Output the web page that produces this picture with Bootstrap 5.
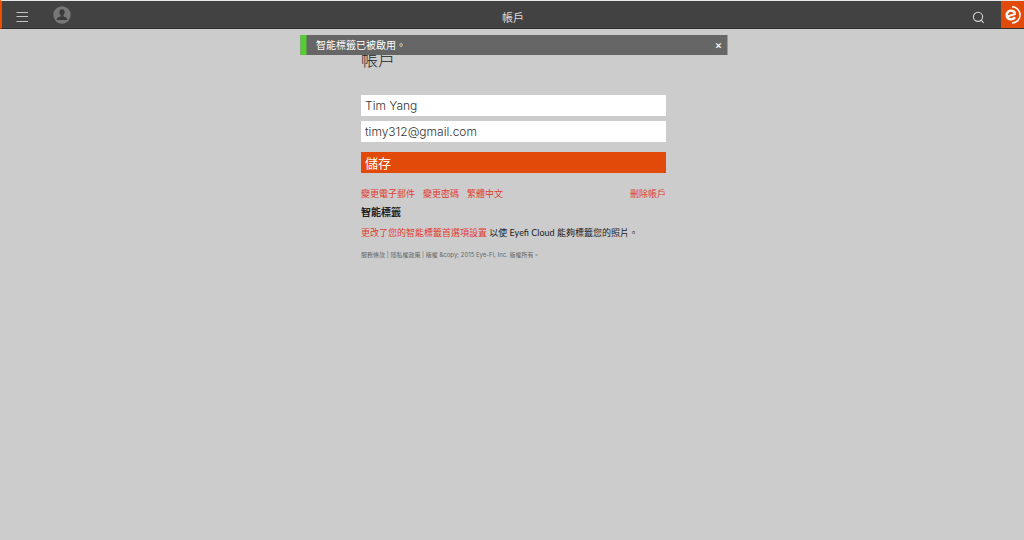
<!DOCTYPE html>
<html lang="zh-Hant">
<head>
<meta charset="utf-8">
<meta name="viewport" content="width=device-width, initial-scale=1">
<title>帳戶</title>
<link href="https://cdn.jsdelivr.net/npm/bootstrap@5.3.0/dist/css/bootstrap.min.css" rel="stylesheet">
<style>
  body { background: #ccc; color: #222; font-family: Inter, "Noto Sans CJK TC", sans-serif; font-size: 9px; line-height: 12px; font-weight: 400; }
  a { color: #e23b30; text-decoration: none; }
  a:hover { text-decoration: underline; }
  svg { display: block; }
  .topbar { height: 29px; background: #424242; border-top: 1px solid #e4e8e8; border-bottom: 1px solid #2e2e2e; border-left: 2px solid #f04e00; }
  .topbar-side { flex: 1 1 0; }
  .topbar-title { color: #ddd; font-size: 11px; line-height: 16px; padding-top: 6px; }
  .icon-btn { background: none; border: 0; padding: 0; }
  .menu-btn { margin-left: 14px; margin-top: 4px; }
  .user-btn { margin-left: 24px; margin-top: 1px; }
  .search-btn { margin-right: 16px; margin-top: 5px; }
  .brand { background: #e24a0a; width: 23px; }
  .page-body { margin-left: 3px; padding-top: 19px; }
  .notice { top: 6px; width: 427px; max-width: 100%; min-height: 20px; background: #666; border-left: 6px solid #5c3; color: #fff; font-size: 10px; line-height: 20px; padding: 0 5px 0 10px; z-index: 5; }
  .notice-close { color: #fff; font-size: 11px; line-height: 20px; font-weight: 500; }
  .account { width: 305px; max-width: 100%; }
  .page-title { font-size: 17px; line-height: 24px; font-weight: 300; margin: 0 0 23px; }
  .field { min-height: 0; border: 0; border-radius: 0; padding: 0 4px; font-size: 12px; line-height: 21px; font-weight: 300; color: #333; margin-bottom: 5px; }
  .field:focus { box-shadow: none; outline: 1px solid #e24a0a; }
  .save-btn { height: 21px; background: #e24a0a; color: #fff; border: 0; border-radius: 0; padding: 0 4px; font-size: 13px; line-height: 22px; font-weight: 400; margin-top: 5px; }
  .save-btn:hover { background: #c94006; color: #fff; }
  .account-links { gap: 8px; margin: 15px 0 5px; }
  .section-title { font-size: 10px; line-height: 14px; font-weight: 700; }
  .hint { font-family: Lato, "Noto Sans CJK TC", sans-serif; margin-bottom: 11px; }
  .fine-print { font-size: 6px; line-height: 10px; color: #666; }
  .fine-print a { color: inherit; }
</style>
</head>
<body>
<header class="topbar d-flex align-items-stretch">
  <div class="topbar-side d-flex align-items-center">
    <button type="button" class="icon-btn menu-btn" aria-label="選單">
      <svg width="13" height="12" viewBox="0 0 13 12" stroke="#c4c4c4" stroke-width="1"><path d="M0.500 1.500h11.500M0.500 5.500h11.500M0.500 10.500h11.500"/></svg>
    </button>
    <button type="button" class="icon-btn user-btn" aria-label="使用者">
      <svg width="18" height="18" viewBox="0 0 18 18"><circle cx="9" cy="9" r="8.700" fill="#777"/><path d="M9 3.200c-1.800 0-2.700 1.300-2.600 3 .1 1.500.7 2.300 1.300 3v1c-1.200.7-3.500.9-3.900 2.900v.9h10.400v-.9c-.4-2-2.700-2.200-3.900-2.900v-1c.6-.7 1.200-1.500 1.300-3 .1-1.700-.8-3-2.600-3z" fill="#3c3c3c"/></svg>
    </button>
  </div>
  <div class="topbar-title align-self-center">帳戶</div>
  <div class="topbar-side d-flex justify-content-end">
    <button type="button" class="icon-btn search-btn" aria-label="搜尋">
      <svg width="13" height="13" viewBox="0 0 13 13" fill="none" stroke="#d8d8d8" stroke-width="1.100"><circle cx="6" cy="5.800" r="4.600"/><path d="M9 8.900l2.600 2.900"/></svg>
    </button>
    <a href="#" class="brand d-flex align-items-center justify-content-center" aria-label="Eyefi">
      <svg width="19" height="20" viewBox="0 0 19 20" fill="none"><path d="M9 1.800a7.900 7.900 0 1 1 0 16.200" stroke="#fff" stroke-width="1.500"/><circle cx="8" cy="10" r="4.300" stroke="#fff" stroke-width="2.600" stroke-dasharray="22.500 4.500" transform="rotate(28 8 10)"/><path d="M4.200 11.500l8.600-2.600" stroke="#fff" stroke-width="1.900"/></svg>
    </a>
  </div>
</header>

<div class="page-body position-relative">
  <div class="notice position-absolute start-50 translate-middle-x d-flex justify-content-between" role="status">
    <span>智能標籤已被啟用。</span>
    <button type="button" class="icon-btn notice-close" aria-label="關閉">×</button>
  </div>

  <main class="account mx-auto">
    <h1 class="page-title">帳戶</h1>
    <form>
      <input type="text" class="form-control field" aria-label="名稱" value="Tim Yang">
      <input type="email" class="form-control field" aria-label="電子郵件" value="timy312@gmail.com">
      <button type="submit" class="btn save-btn w-100 text-start">儲存</button>
    </form>
    <nav class="account-links d-flex">
      <a href="#">變更電子郵件</a>
      <a href="#">變更密碼</a>
      <a href="#">繁體中文</a>
      <a href="#" class="ms-auto">刪除帳戶</a>
    </nav>
    <h2 class="section-title">智能標籤</h2>
    <p class="hint text-nowrap"><a href="#">更改了您的智能標籤首選項設置</a> 以使 Eyefi Cloud 能夠標籤您的照片。</p>
    <footer class="fine-print"><a href="#">服務條款</a> | <a href="#">隱私權政策</a> | 版權 &amp;copy; 2015 Eye-Fi, Inc. 版權所有。</footer>
  </main>
</div>
<script src="https://cdn.jsdelivr.net/npm/bootstrap@5.3.0/dist/js/bootstrap.bundle.min.js"></script>
</body>
</html>
